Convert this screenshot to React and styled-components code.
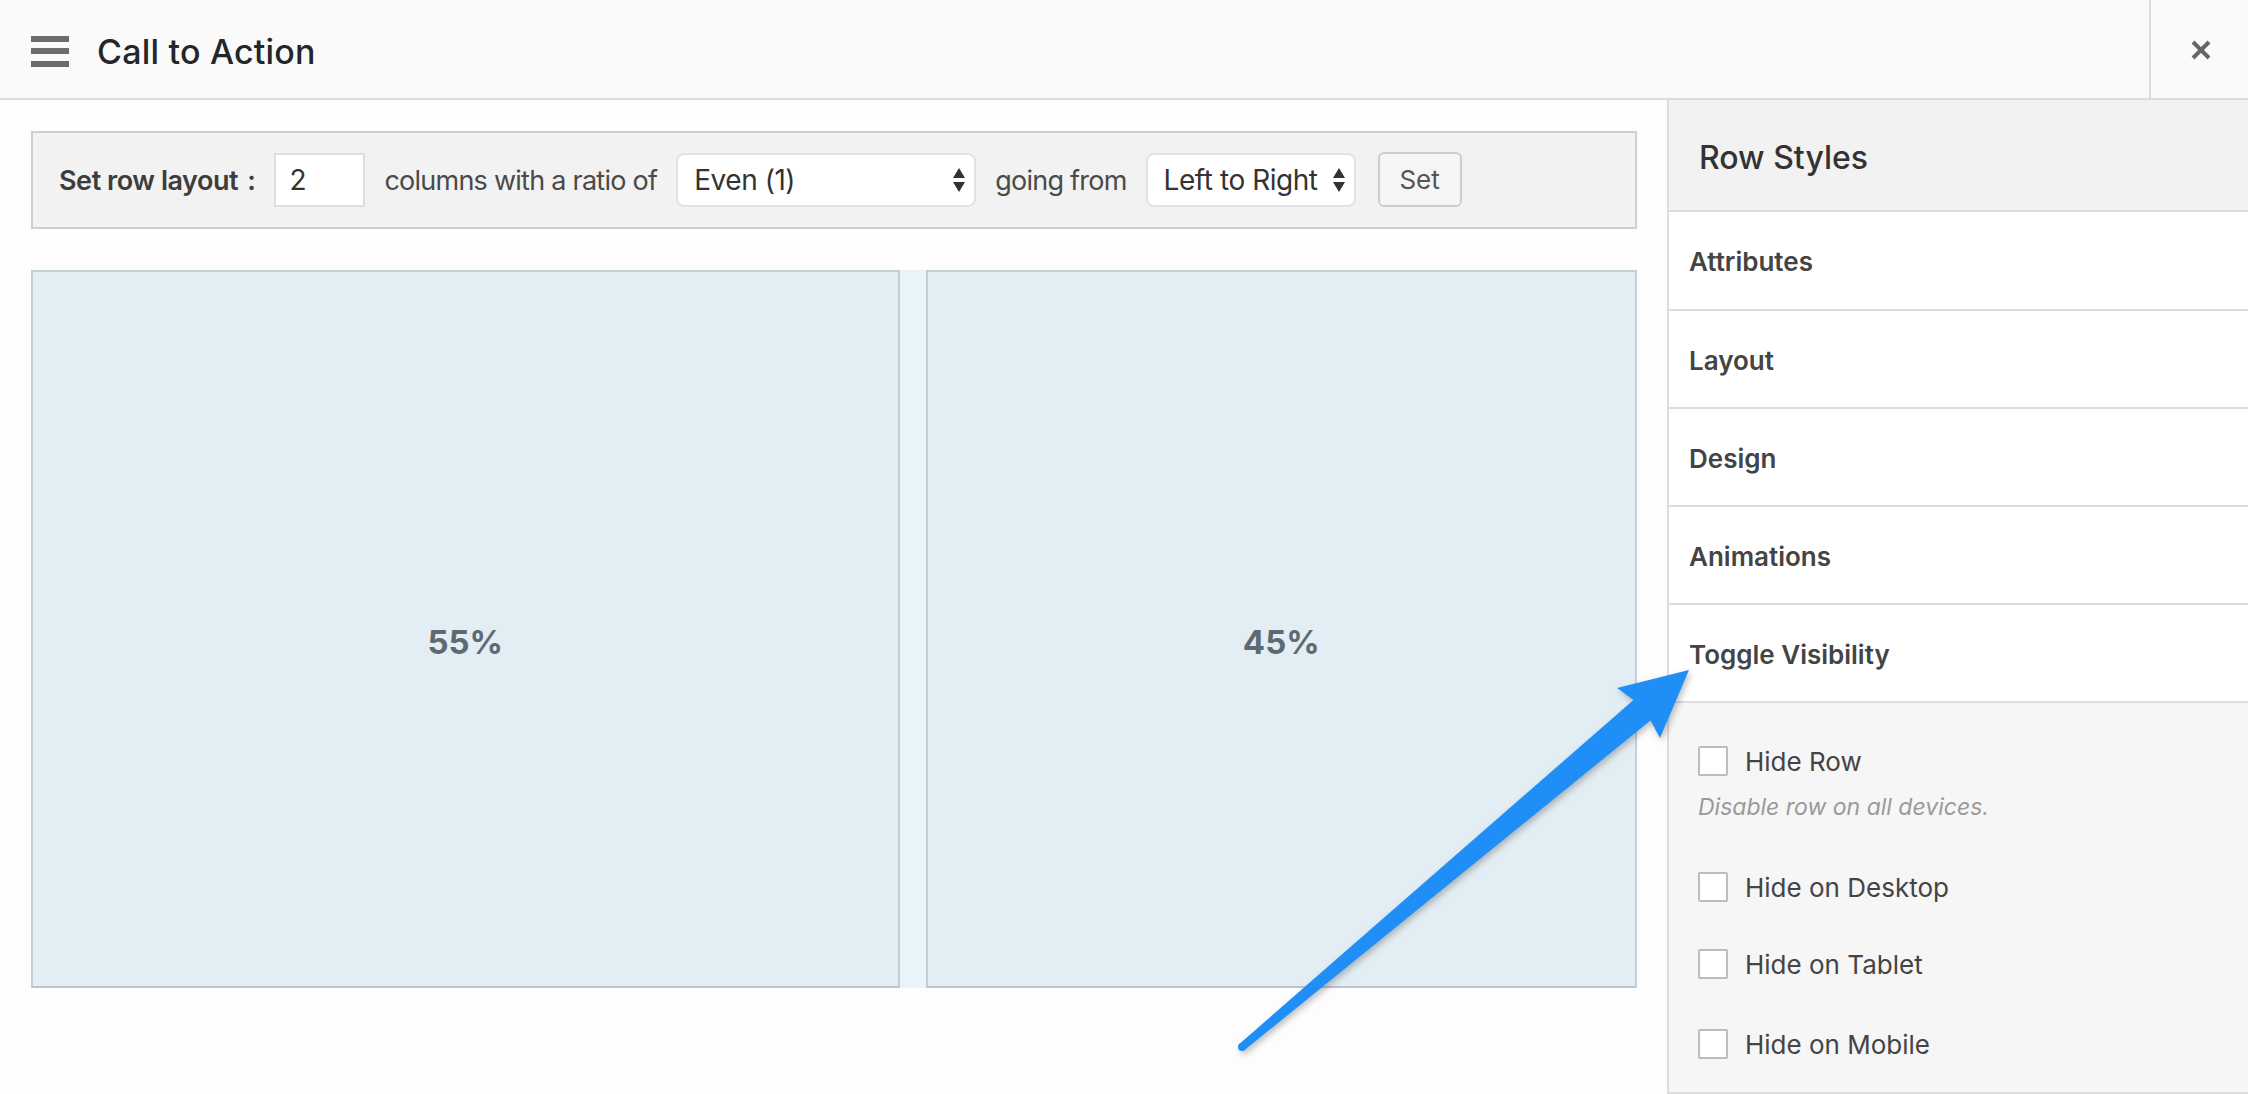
import React from 'react'
import styled, { createGlobalStyle } from 'styled-components'

// ----------------------------------------------------------------------------

const GlobalStyle = createGlobalStyle`
  html, body {
    margin: 0;
    padding: 0;
    background: #fdfdfd;
  }
  body {
    font-family: Inter, 'Liberation Sans', sans-serif;
    color: #333;
  }
  * {
    box-sizing: border-box;
  }
`

const Page = styled.div`
  position: relative;
  width: 2248px;
  height: 1094px;
  display: flex;
  flex-direction: column;
  overflow: hidden;
`

// ----------------------------------------------------------------------------
// top bar

const Header = styled.header`
  height: 100px;
  flex: none;
  display: flex;
  align-items: center;
  background: #fafafa;
  border-bottom: 2px solid #dcdcdc;
`

const MenuIcon = styled.span`
  display: flex;
  flex-direction: column;
  justify-content: space-between;
  width: 38px;
  height: 31px;
  margin-left: 31px;
  margin-top: 4px;

  i {
    display: block;
    height: 6px;
    background: #6c6c6c;
  }
`

const Title = styled.h1`
  margin: 4px 0 0 28px;
  font-size: 34px;
  font-weight: 500;
  color: #23262b;
  letter-spacing: 0.2px;
`

const CloseButton = styled.button`
  margin-left: auto;
  width: 99px;
  height: 100%;
  border: 0;
  border-left: 2px solid #dcdcdc;
  background: transparent;
  display: flex;
  align-items: center;
  justify-content: center;
  padding: 2px 0 0 2px;
`

// ----------------------------------------------------------------------------
// editor area

const Body = styled.div`
  flex: 1;
  display: flex;
  min-height: 0;
`

const Main = styled.main`
  flex: 1;
  padding: 31px 30px 0 31px;
  background: #fdfdfd;
`

const Toolbar = styled.div`
  height: 98px;
  display: flex;
  align-items: center;
  gap: 19px;
  padding-left: 26px;
  background: #f2f2f2;
  border: 2px solid #cfcfcf;
  font-size: 27px;
  letter-spacing: -0.45px;
  color: #444;
`

const Label = styled.span`
  font-weight: 600;
  color: #3d3d3d;

  b {
    font-weight: 600;
    margin-left: 9px;
  }
`

const Text = styled.span`
  color: #4a4a4a;
  letter-spacing: -0.75px;
`

const NumberInput = styled.div`
  width: 91px;
  height: 54px;
  display: flex;
  align-items: center;
  padding-left: 13px;
  background: #fff;
  border: 2px solid #dedede;
  font-size: 28px;
  color: #333;
`

const Select = styled.div`
  width: ${(p) => p.$width}px;
  height: 54px;
  display: flex;
  align-items: center;
  justify-content: space-between;
  gap: 6px;
  padding: 0 8px 0 16px;
  background: #fff;
  border: 2px solid #e2e2e2;
  border-radius: 8px;
  font-size: 28px;
  color: #333;
  white-space: nowrap;
`

const SetButton = styled.button`
  width: 84px;
  height: 55px;
  margin-left: 3px;
  margin-top: -2px;
  background: #f5f5f5;
  border: 2px solid #cdcdcd;
  border-radius: 6px;
  font-family: inherit;
  font-size: 26px;
  color: #555;
`

const ColumnRow = styled.div`
  margin-top: 41px;
  height: 718px;
  display: flex;
  gap: 26px;
  background: #e8f4fa;
`

const Column = styled.div`
  flex: ${(p) => p.$ratio};
  display: flex;
  align-items: center;
  justify-content: center;
  padding-top: 26px;
  background: #e3eef4;
  border: 2px solid #c3cfd7;
  border-bottom-color: #b9c6cf;
  font-size: 33px;
  font-weight: 700;
  color: #5e6a72;
`

// ----------------------------------------------------------------------------
// side panel

const Sidebar = styled.aside`
  width: 581px;
  flex: none;
  display: flex;
  flex-direction: column;
  background: #fff;
  border-left: 2px solid #dcdcdc;
  border-bottom: 2px solid #dcdcdc;
`

const SidebarTitle = styled.h2`
  margin: 0;
  height: 112px;
  display: flex;
  align-items: center;
  padding: 4px 0 0 30px;
  background: #f2f2f2;
  border-bottom: 2px solid #dcdcdc;
  font-size: 32px;
  font-weight: 500;
  color: #333;
`

const Section = styled.div`
  height: ${(p) => (p.$first ? 99 : 98)}px;
  display: flex;
  align-items: center;
  padding: 2px 0 0 20px;
  border-bottom: 2px solid #dcdcdc;
  font-size: 26px;
  font-weight: 600;
  color: #444;
`

const Panel = styled.div`
  flex: 1;
  padding: 43px 0 0 29px;
  background: #f6f6f6;
`

const CheckRow = styled.label`
  display: flex;
  align-items: center;
  gap: 17px;
  height: 30px;
  margin-bottom: ${(p) => p.$space}px;
  font-size: 26px;
  color: #444;
`

const Box = styled.span`
  width: 30px;
  height: 30px;
  flex: none;
  background: #fff;
  border: 2px solid #bdbdbd;
  border-radius: 2px;
`

const Hint = styled.p`
  margin: 16px 0 50px;
  font-size: 23px;
  font-style: italic;
  color: #9a9a9a;
  line-height: 30px;
`

// ----------------------------------------------------------------------------
// annotation arrow drawn over the page

const Overlay = styled.svg`
  position: absolute;
  top: 0;
  left: 0;
  pointer-events: none;
  filter: drop-shadow(2px 3px 3px rgba(0, 0, 0, 0.25));
`

const SelectArrows = () => (
  <svg width="14" height="26" viewBox="0 0 14 26">
    <path d="M7 1 L13 11 L1 11 Z" fill="#333" />
    <path d="M7 25 L13 15 L1 15 Z" fill="#333" />
  </svg>
)

const Arrow = () => (
  <Overlay width="2248" height="1094" viewBox="0 0 2248 1094">
    <path
      d="M1239.4 1043.9 L1633.5 700 L1617 688 L1689 670 L1660 738 L1650.5 720.5 L1244.6 1050.1 Z"
      fill="#1f8ff7"
    />
    <circle cx="1242" cy="1047" r="4" fill="#1f8ff7" />
  </Overlay>
)

const checks = [
  { label: 'Hide on Desktop', space: 47 },
  { label: 'Hide on Tablet', space: 50 },
  { label: 'Hide on Mobile', space: 0 },
]

export default function App() {
  return (
    <Page>
      <GlobalStyle />
      <Header>
        <MenuIcon>
          <i />
          <i />
          <i />
        </MenuIcon>
        <Title>Call to Action</Title>
        <CloseButton aria-label="Close">
          <svg width="20" height="20" viewBox="0 0 20 20">
            <path d="M2 2 L18 18 M18 2 L2 18" stroke="#666" strokeWidth="4" />
          </svg>
        </CloseButton>
      </Header>

      <Body>
        <Main>
          <Toolbar>
            <Label>
              Set row layout<b>:</b>
            </Label>
            <NumberInput>2</NumberInput>
            <Text>columns with a ratio of</Text>
            <Select $width={300}>
              Even (1)
              <SelectArrows />
            </Select>
            <Text>going from</Text>
            <Select $width={210}>
              Left to Right
              <SelectArrows />
            </Select>
            <SetButton>Set</SetButton>
          </Toolbar>

          <ColumnRow>
            <Column $ratio={55}>55%</Column>
            <Column $ratio={45}>45%</Column>
          </ColumnRow>
        </Main>

        <Sidebar>
          <SidebarTitle>Row Styles</SidebarTitle>
          <Section $first>Attributes</Section>
          <Section>Layout</Section>
          <Section>Design</Section>
          <Section>Animations</Section>
          <Section>Toggle Visibility</Section>
          <Panel>
            <CheckRow>
              <Box />
              Hide Row
            </CheckRow>
            <Hint>Disable row on all devices.</Hint>
            {checks.map((c) => (
              <CheckRow key={c.label} $space={c.space}>
                <Box />
                {c.label}
              </CheckRow>
            ))}
          </Panel>
        </Sidebar>
      </Body>
      <Arrow />
    </Page>
  )
}
